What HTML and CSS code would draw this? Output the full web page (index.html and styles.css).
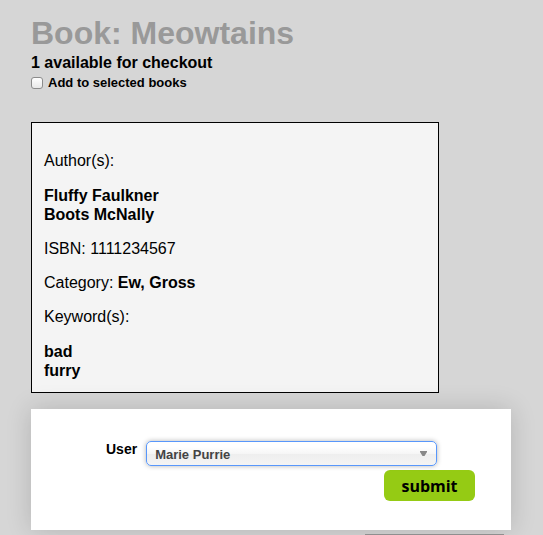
FILE: index.html
```html
<!DOCTYPE html>
<html lang="en">
<head>
<meta charset="utf-8">
<meta name="viewport" content="width=device-width, initial-scale=1">
<title>Book: Meowtains</title>
<link rel="stylesheet" href="styles.css">
</head>
<body>
<main class="page">
  <h1 class="title">Book: Meowtains</h1>
  <p class="availability">1 available for checkout</p>
  <label class="pick"><input class="pick-box" type="checkbox">Add to selected books</label>

  <section class="details">
    <p>Author(s):</p>
    <ul>
      <li>Fluffy Faulkner</li>
      <li>Boots McNally</li>
    </ul>
    <p>ISBN: 1111234567</p>
    <p>Category: <strong>Ew, Gross</strong></p>
    <p>Keyword(s):</p>
    <ul>
      <li>bad</li>
      <li>furry</li>
    </ul>
  </section>

  <form class="checkout">
    <div class="field">
      <label class="field-label" for="user">User</label>
      <div class="select-wrap">
        <select class="select" id="user">
          <option>Marie Purrie</option>
        </select>
        <svg class="arrow" viewBox="0 0 7 6" width="7" height="6" aria-hidden="true"><path d="M0 0H7V1L4.5 5H2.5L0 1Z" fill="#888"/></svg>
      </div>
    </div>
    <button class="submit" type="submit">submit</button>
  </form>
  <hr class="edge">
</main>
</body>
</html>
```
FILE: styles.css
```css
* {
  box-sizing: border-box;
}

body {
  margin: 0;
  background: #d6d6d6;
  color: #000;
  font: 16px/19px "Liberation Sans", Arial, sans-serif;
}

.page {
  padding: 14px 32px 0 31px;
}

.title {
  margin: 0;
  color: #999;
  font-size: 32px;
  line-height: 38px;
}

.availability {
  margin: 0;
  font-weight: bold;
  line-height: 22px;
}

.pick {
  display: flex;
  align-items: center;
  gap: 5px;
  width: fit-content;
  font-size: 13px;
  font-weight: bold;
  line-height: 18px;
}

.pick-box {
  appearance: none;
  width: 12px;
  height: 12px;
  margin: 0;
  border: 1px solid #8c8c8c;
  border-radius: 3px;
  background: linear-gradient(#fff, #e8e8e8);
}

.pick-box:checked {
  background: #5897fb;
}

.details {
  width: 85%;
  margin-top: 30px;
  padding: 13px 12px 12px;
  border: 1px solid #000;
  background: #f4f4f4;
}

.details p {
  margin: 15px 0;
}

.details ul {
  margin: 16px 0 15px;
  padding: 0;
  list-style: none;
  font-weight: bold;
}

.details ul:last-child {
  margin-bottom: 0;
}

.checkout {
  display: flex;
  flex-direction: column;
  margin-top: 16px;
  padding: 32px 36px 29px 75px;
  background: #fff;
  box-shadow: 0 0 24px rgba(0, 0, 0, 0.16);
}

.field {
  display: flex;
  gap: 9px;
  padding-right: 38px;
}

.field-label {
  font-size: 14px;
  font-weight: bold;
  line-height: 16px;
}

.select-wrap {
  position: relative;
  flex: 1;
}

.select {
  appearance: none;
  display: block;
  width: 100%;
  height: 25px;
  padding: 2px 24px 0 8px;
  border: 1px solid #5897fb;
  border-radius: 5px;
  background: linear-gradient(#fff 20%, #f6f6f6 50%, #eee 52%, #f4f4f4 100%);
  box-shadow: 0 0 5px rgba(0, 0, 0, 0.3);
  color: #444;
  font: bold 13px "Liberation Sans", Arial, sans-serif;
}

.arrow {
  position: absolute;
  top: 10px;
  right: 10px;
  pointer-events: none;
}

.submit {
  align-self: flex-end;
  width: 91px;
  height: 31px;
  margin-top: 4px;
  padding: 0;
  border: 0;
  border-radius: 6px;
  background: #95cb14;
  color: #000;
  font: bold 16px "Open Sans", "Noto Sans", sans-serif;
}

.edge {
  width: 29%;
  height: 1px;
  margin: 4px 7px 0 auto;
  border: 0;
  background: #8f8f8f;
}
```
